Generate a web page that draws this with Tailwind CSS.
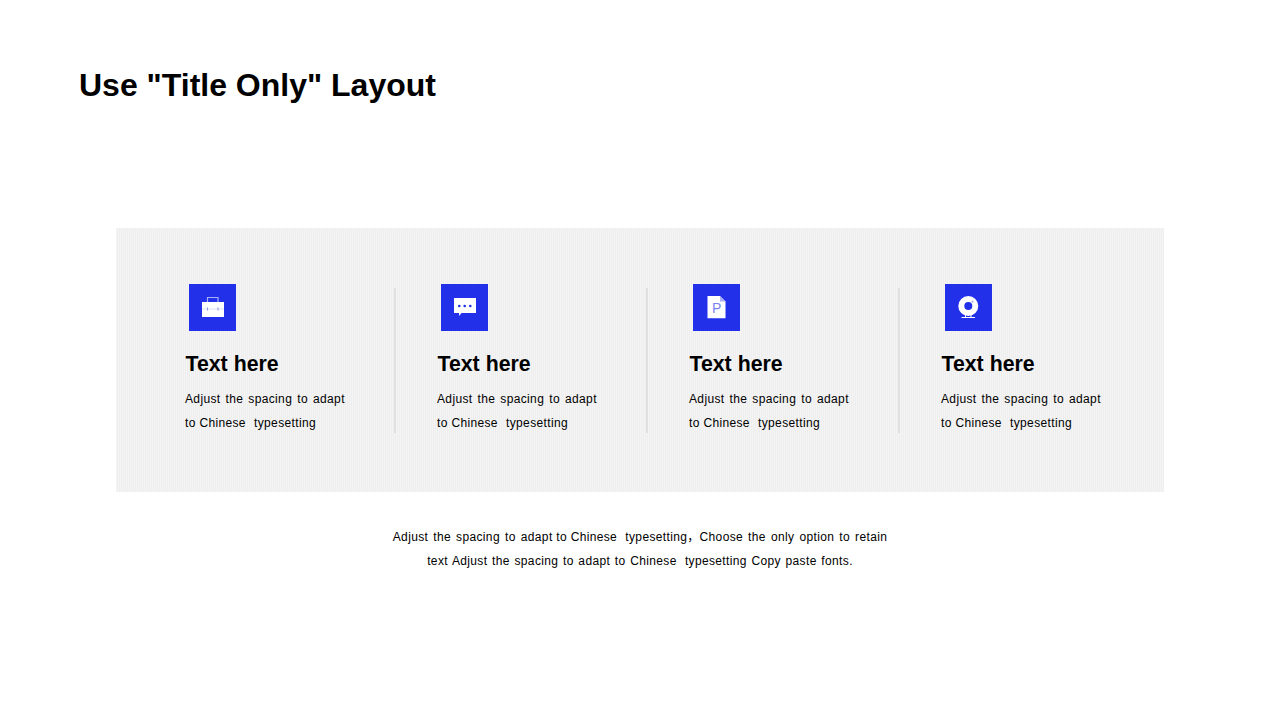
<!DOCTYPE html>
<html lang="en">
<head>
  <meta charset="UTF-8" />
  <meta name="viewport" content="width=device-width, initial-scale=1.0" />
  <title>Title Only Layout</title>
  <script src="https://cdn.jsdelivr.net/npm/@tailwindcss/browser@4"></script>
</head>
<body class="h-[720px] w-[1280px] overflow-hidden bg-white text-black font-['Liberation_Sans','Noto_Sans_CJK_SC',sans-serif]">
  <header class="pl-[79px] pt-[65px] h-[228px]">
    <h1 class="text-[32px] leading-[40px] font-bold">Use "Title Only" Layout</h1>
  </header>

  <section class="mx-[116px] h-[264px] pl-[69px] pt-[56px] flex bg-[#f1f1f1] bg-[repeating-linear-gradient(90deg,#f4f4f4_0,#f4f4f4_1px,#eeeeee_1px,#eeeeee_2px)]">
    <!-- Card 1 -->
    <div class="w-[252px] flex">
      <div class="w-[209px]">
        <svg class="ml-1 w-[47px] h-[47px] block" viewBox="0 0 47 47">
          <rect width="47" height="47" fill="#2230ea" />
          <path d="M18.500 18v-4.500h10.500v4.500" fill="none" stroke="#aab0f8" stroke-width="1.200" />
          <path d="M13 18h22v15h-22z" fill="#fff" />
          <path d="M13 25h22" stroke="#dfe1fc" stroke-width="1" />
          <path d="M18.500 23.500v3M29 23.500v3" stroke="#8f96f5" stroke-width="1" />
        </svg>
        <h2 class="mt-[19px] ml-[0.5px] text-[21.300px] leading-[28px] font-bold">Text here</h2>
        <p class="mt-[9px] text-xs leading-6 tracking-[0.35px] whitespace-nowrap"><span class="[word-spacing:1.400px]">Adjust the spacing to </span>adapt<br />to Chinese<span class="[word-spacing:4.500px]"> </span>typesetting</p>
      </div>
      <div class="mt-1 w-[2px] h-[145px] bg-[#e0e0e0]"></div>
    </div>
    <!-- Card 2 -->
    <div class="w-[252px] flex">
      <div class="w-[209px]">
        <svg class="ml-1 w-[47px] h-[47px] block" viewBox="0 0 47 47">
          <rect width="47" height="47" fill="#2230ea" />
          <path d="M13 14h22v15h-14.500l-2.500 3v-3h-5z" fill="#fff" />
          <circle cx="18.300" cy="22" r="1.300" fill="#2230ea" />
          <circle cx="23.700" cy="22" r="1.300" fill="#2230ea" />
          <circle cx="29.300" cy="22" r="1.300" fill="#2230ea" />
        </svg>
        <h2 class="mt-[19px] ml-[0.5px] text-[21.300px] leading-[28px] font-bold">Text here</h2>
        <p class="mt-[9px] text-xs leading-6 tracking-[0.35px] whitespace-nowrap"><span class="[word-spacing:1.400px]">Adjust the spacing to </span>adapt<br />to Chinese<span class="[word-spacing:4.500px]"> </span>typesetting</p>
      </div>
      <div class="mt-1 w-[2px] h-[145px] bg-[#e0e0e0]"></div>
    </div>
    <!-- Card 3 -->
    <div class="w-[252px] flex">
      <div class="w-[209px]">
        <svg class="ml-1 w-[47px] h-[47px] block" viewBox="0 0 47 47">
          <rect width="47" height="47" fill="#2230ea" />
          <path d="M14.500 12h12.500l5.500 5.500v16.800h-18z" fill="#fff" />
          <path d="M27 12.500v5h5.500z" fill="#aab0f8" />
          <text x="19" y="29" font-size="14" fill="#7b83f3" font-family="Liberation Sans">P</text>
        </svg>
        <h2 class="mt-[19px] ml-[0.5px] text-[21.300px] leading-[28px] font-bold">Text here</h2>
        <p class="mt-[9px] text-xs leading-6 tracking-[0.35px] whitespace-nowrap"><span class="[word-spacing:1.400px]">Adjust the spacing to </span>adapt<br />to Chinese<span class="[word-spacing:4.500px]"> </span>typesetting</p>
      </div>
      <div class="mt-1 w-[2px] h-[145px] bg-[#e0e0e0]"></div>
    </div>
    <!-- Card 4 -->
    <div class="w-[209px]">
      <svg class="ml-1 w-[47px] h-[47px] block" viewBox="0 0 47 47">
        <rect width="47" height="47" fill="#2230ea" />
        <circle cx="23.300" cy="22" r="7" fill="none" stroke="#fff" stroke-width="6" />
        <circle cx="27.500" cy="17.700" r="0.900" fill="#8f96f5" />
        <path d="M20.500 31v2M26 31v2" stroke="#fff" stroke-width="1" />
        <path d="M16.500 33.500h13.500" stroke="#fff" stroke-width="1" />
      </svg>
      <h2 class="mt-[19px] ml-[0.5px] text-[21.300px] leading-[28px] font-bold">Text here</h2>
      <p class="mt-[9px] text-xs leading-6 tracking-[0.35px] whitespace-nowrap"><span class="[word-spacing:1.400px]">Adjust the spacing to </span>adapt<br />to Chinese<span class="[word-spacing:4.500px]"> </span>typesetting</p>
    </div>
  </section>

  <p class="mt-[33px] text-xs leading-6 tracking-[0.35px] text-center whitespace-nowrap">
    <span class="[word-spacing:1.400px]">Adjust the spacing to </span>adapt to Chinese<span class="[word-spacing:4.500px]"> </span>typesetting，<span class="[word-spacing:1.400px]">Choose the only option to </span>retain<br />
    <span class="[word-spacing:1px]">text Adjust the spacing to adapt to Chinese<span class="[word-spacing:4.500px]"> </span>typesetting Copy paste fonts.</span>
  </p>
</body>
</html>
